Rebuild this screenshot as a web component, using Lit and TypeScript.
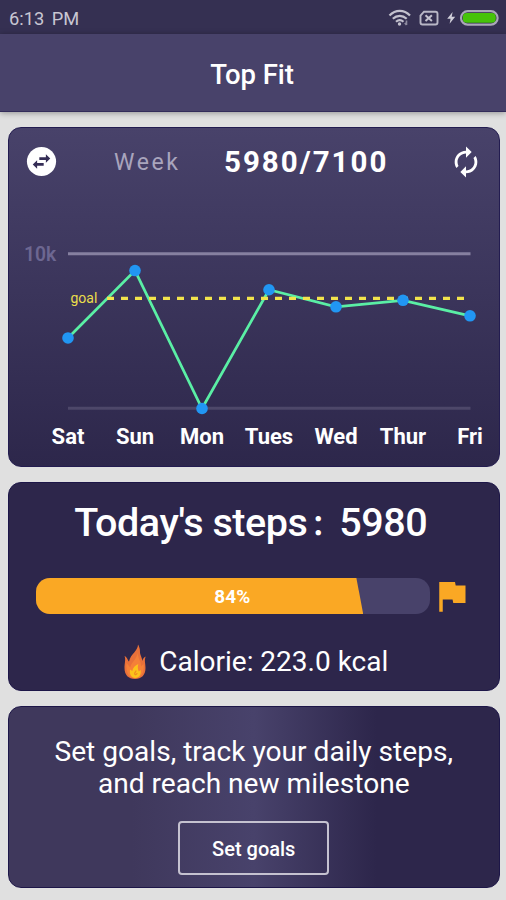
import { LitElement, html, css, svg } from "lit";
import { customElement, property } from "lit/decorators.js";

@customElement("status-bar")
class StatusBar extends LitElement {
  static styles = css`
    :host { display: flex; align-items: center; justify-content: space-between; height: 34px; padding: 3px 7px 0 9px; box-sizing: border-box; background: #353052; color: #c8c6d2; }
    .time { font: 18.3px/31px Roboto, sans-serif; word-spacing: 3px; white-space: nowrap; }
    .icons { display: block; width: 112px; height: 24px; }
  `;
  render() {
    return html`
      <span class="time">6:13 PM</span>
      <svg class="icons" viewBox="387 7 112 24" fill="none">
        <g stroke="#c3c1ce" stroke-width="2.2">
          <path d="M389.5 15.6c6-6.2 14.500-6.200 20.500 0" />
          <path d="M392.800 18.800c4.200-4 9.700-4 13.900 0" />
          <path d="M396 21.800c2.300-2.100 5.200-2.100 7.500 0" />
        </g>
        <circle cx="399.500" cy="24" r="1.700" fill="#c3c1ce" />
        <path d="M406.500 20.500v4.500M404.800 23l1.700 2" stroke="#8e8ba0" stroke-width="1.600" />
        <path d="M424 11.700h11.500a2 2 0 0 1 2 2v8.800a2 2 0 0 1-2 2h-13a2 2 0 0 1-2-2v-7z" stroke="#b9b7c6" stroke-width="1.900" />
        <path d="M425.500 15.200l6.400 5.800M431.900 15.200L425.500 21" stroke="#c3c1ce" stroke-width="2" />
        <path d="M452.600 12l-5.400 6.800h3.400l-1 5 5.600-7h-3.500z" fill="#d0ced9" />
        <rect x="461" y="11.200" width="36.600" height="13.400" rx="6.700" fill="#2e2a48" stroke="#aaa7b9" stroke-width="2.200" />
        <rect x="462.800" y="13" width="33" height="9.800" rx="4" fill="#46c30a" />
      </svg>`;
  }
}

@customElement("steps-chart")
class StepsChart extends LitElement {
  @property({ attribute: false }) days = ["Sat", "Sun", "Mon", "Tues", "Wed", "Thur", "Fri"];
  @property({ attribute: false }) steps = [4550, 8900, 0, 7660, 6560, 6980, 5980];

  static styles = css`
    :host { display: block; }
    .plot { display: block; width: 492px; height: 246px; font-family: Roboto, sans-serif; }
    .axis { font-size: 19.300px; font-weight: 600; fill: #6d6791; }
    .goal { font-size: 14px; fill: #eade4b; }
    .day { font-size: 22px; font-weight: 700; fill: #fff; text-anchor: middle; }
  `;
  private x(i: number) { return 60 + i * 67; }
  private y(v: number) { return 187.500 - (v / 10000) * 155; }
  render() {
    const pts = this.steps.map((v, i) => [this.x(i), this.y(v)]);
    return html`
      <svg class="plot" viewBox="0 0 492 246">
        <text class="axis" x="16" y="39.500">10k</text>
        <path d="M60 32.700H462.500" stroke="#8680a0" stroke-width="3" />
        <path d="M60 187.300H462.500" stroke="#4d4769" stroke-width="3" />
        <polyline points=${pts.map((p) => p.join(",")).join(" ")} fill="none" stroke="#5aefa5" stroke-width="2.700" />
        <text class="goal" x="62.500" y="82">goal</text>
        <path d="M99 77.400H459" stroke="#f2e44c" stroke-width="3.200" stroke-dasharray="7 7" />
        ${pts.map((p) => svg`<circle cx=${p[0]} cy=${p[1]} r="5.800" fill="#2196f3" />`)}
        ${this.days.map((d, i) => svg`<text class="day" x=${this.x(i)} y="222.600">${d}</text>`)}
      </svg>`;
  }
}

@customElement("app-root")
class AppRoot extends LitElement {
  @property({ type: Number }) progress = 84;

  static styles = css`
    :host { display: block; width: 506px; height: 900px; overflow: hidden; background: #e0e0e0; color: #fff; font-family: Roboto, sans-serif; }
    .appbar { height: 78px; line-height: 82px; background: #48426a; border-bottom: 1px solid #332c5a; box-sizing: border-box; text-align: center; font-size: 27.500px; font-weight: 500; letter-spacing: -0.100px; padding-right: 2px; box-shadow: 0 1px 6px rgba(0, 0, 0, 0.350); }
    .cards { display: flex; flex-direction: column; gap: 15px; padding: 15px 6.500px 0 8px; }
    .card { border-radius: 13px; box-sizing: border-box; border: 1px solid #1d1648; overflow: hidden; }
    .week { height: 340px; background: linear-gradient(#48426a, #2d274b); border-color: #231c50; }
    .head { display: grid; grid-template-columns: 104px 111px 1fr 49.500px; align-items: center; height: 67px; }
    .swap { display: block; width: 35px; height: 35px; margin-left: 14.500px; margin-top: -1px; }
    .label { font-size: 23px; letter-spacing: 2.600px; color: #a9a5bd; padding-left: 1px; padding-top: 1px; }
    .total { font-size: 29.500px; font-weight: 700; letter-spacing: 2px; white-space: nowrap; }
    .sync { display: block; width: 34px; height: 34px; }
    .plot { margin: 26px 0 0 -1px; width: 492px; }
    .today { height: 209px; background: #2d264b; display: flex; flex-direction: column; align-items: center; }
    .title { font-size: 39.500px; font-weight: 500; line-height: 50px; letter-spacing: -0.450px; margin: 15px 6px 0 0; display: grid; grid-template-columns: auto 32px auto; white-space: nowrap; }
    .colon { font-family: "Noto Sans CJK SC", sans-serif; font-size: 28px; font-weight: 700; letter-spacing: 0; padding-left: 4px; }
    .goalrow { display: flex; align-items: center; margin: 27px 0 0 27px; align-self: flex-start; }
    .track { width: 393.500px; height: 36px; border-radius: 14px; overflow: hidden; background: #48426a; display: grid; }
    .fill, .percent { grid-area: 1 / 1; }
    .fill { background: #faa824; clip-path: polygon(0 0, calc(100% - 7px) 0, 100% 100%, 0 100%); }
    .percent { z-index: 1; text-align: center; font-size: 19px; font-weight: 700; line-height: 37px; padding-right: 1px; }
    .flag { display: block; width: 43px; height: 42px; }
    .calorie { display: flex; gap: 13px; font-size: 28px; line-height: 36px; margin: 27px 0 0 5px; white-space: nowrap; }
    .flame { display: block; width: 22px; height: 36px; }
    .goals { height: 182px; display: flex; flex-direction: column; align-items: center; background: linear-gradient(90deg, #3f385c 0 25%, #48426b 50%, #2d264b 75%); }
    .pitch { margin-top: 28.500px; font-size: 28.100px; line-height: 32.300px; text-align: center; white-space: nowrap; }
    .button { margin-top: 21px; width: 151px; height: 54px; box-sizing: border-box; border: 2px solid #c5c2d0; border-radius: 4px; background: none; color: #fff; font: 500 20px Roboto, sans-serif; padding: 2px 0 0; }
  `;

  render() {
    return html`
      <status-bar></status-bar>
      <div class="appbar">Top Fit</div>
      <div class="cards">
        <section class="card week">
          <div class="head">
            <svg class="swap" viewBox="0 0 24 24">
              <circle cx="12" cy="12" r="10" fill="#fff" />
              <path d="M18 10l-3-2.900v2h-4.500v1.800H15v2zM6 14l3 2.900v-2h4.500v-1.800H9v-2z" fill="#342d56" />
            </svg>
            <span class="label">Week</span>
            <span class="total">5980/7100</span>
            <svg class="sync" viewBox="0 0 24 24" fill="#fff">
              <path d="M12 6v3l4-4-4-4v3c-4.420 0-8 3.580-8 8 0 1.570.460 3.030 1.240 4.260L6.700 14.800c-.450-.830-.700-1.790-.700-2.800 0-3.310 2.690-6 6-6zm6.760 1.740L17.300 9.200c.440.840.700 1.790.700 2.800 0 3.310-2.690 6-6 6v-3l-4 4 4 4v-3c4.420 0 8-3.580 8-8 0-1.570-.460-3.030-1.240-4.260z" />
            </svg>
          </div>
          <steps-chart class="plot"></steps-chart>
        </section>
        <section class="card today">
          <div class="title"><span>Today's steps</span><span class="colon">：</span><span>5980</span></div>
          <div class="goalrow">
            <div class="track">
              <div class="fill" style="width: ${this.progress - 0.8}%"></div>
              <div class="percent">${this.progress}%</div>
            </div>
            <svg class="flag" viewBox="0 0 24 24" fill="#faa824"><path d="M14.400 6L14 4H5v17h2v-7h5.600l.4 2h7V6z" /></svg>
          </div>
          <div class="calorie">
            <svg class="flame" viewBox="0 0 22 36">
              <path d="M14 0.500C14 7 6.500 10 5 17.500 3.500 16 3.500 13.500 0.500 12 2 15.500.5 19 .5 24 .5 31 4.500 35 11 35s10.500-4 10.500-11c0-5-1.500-8 .3-11.500-2 1-3 2-3.300 4.500-1-5-2.500-6-2.500-9 .1-3-.8-5.500-2-7.500z" fill="#e8703a" />
              <path d="M13.500 9c-.5 6-6 9-7.300 14.500L2.500 19c-.8 9 2 15 8.500 15s9.700-6 8.500-14L17 22.500c.2-5-2.700-7.500-3.500-13.500z" fill="#f58038" />
              <path d="M14.300 20c-3 1.500-5.500 3.500-6 7L6 25.500c-.8 4.500 1.500 8.500 5.300 8.500 4.200 0 6.200-4 5.200-8l-1.700 1.500c-1-2.500-1.300-4.500-.5-7.500z" fill="#fcc21b" />
              <path d="M12 26.500c0 1.700-1.800 2-1.300 3.500.5 1.200 2.300.5 2.300-1" fill="none" stroke="#f08b22" stroke-width="1.200" />
            </svg>
            <span>Calorie: 223.0 kcal</span>
          </div>
        </section>
        <section class="card goals">
          <div class="pitch">Set goals, track your daily steps,<br />and reach new milestone</div>
          <button class="button">Set goals</button>
        </section>
      </div>`;
  }
}
